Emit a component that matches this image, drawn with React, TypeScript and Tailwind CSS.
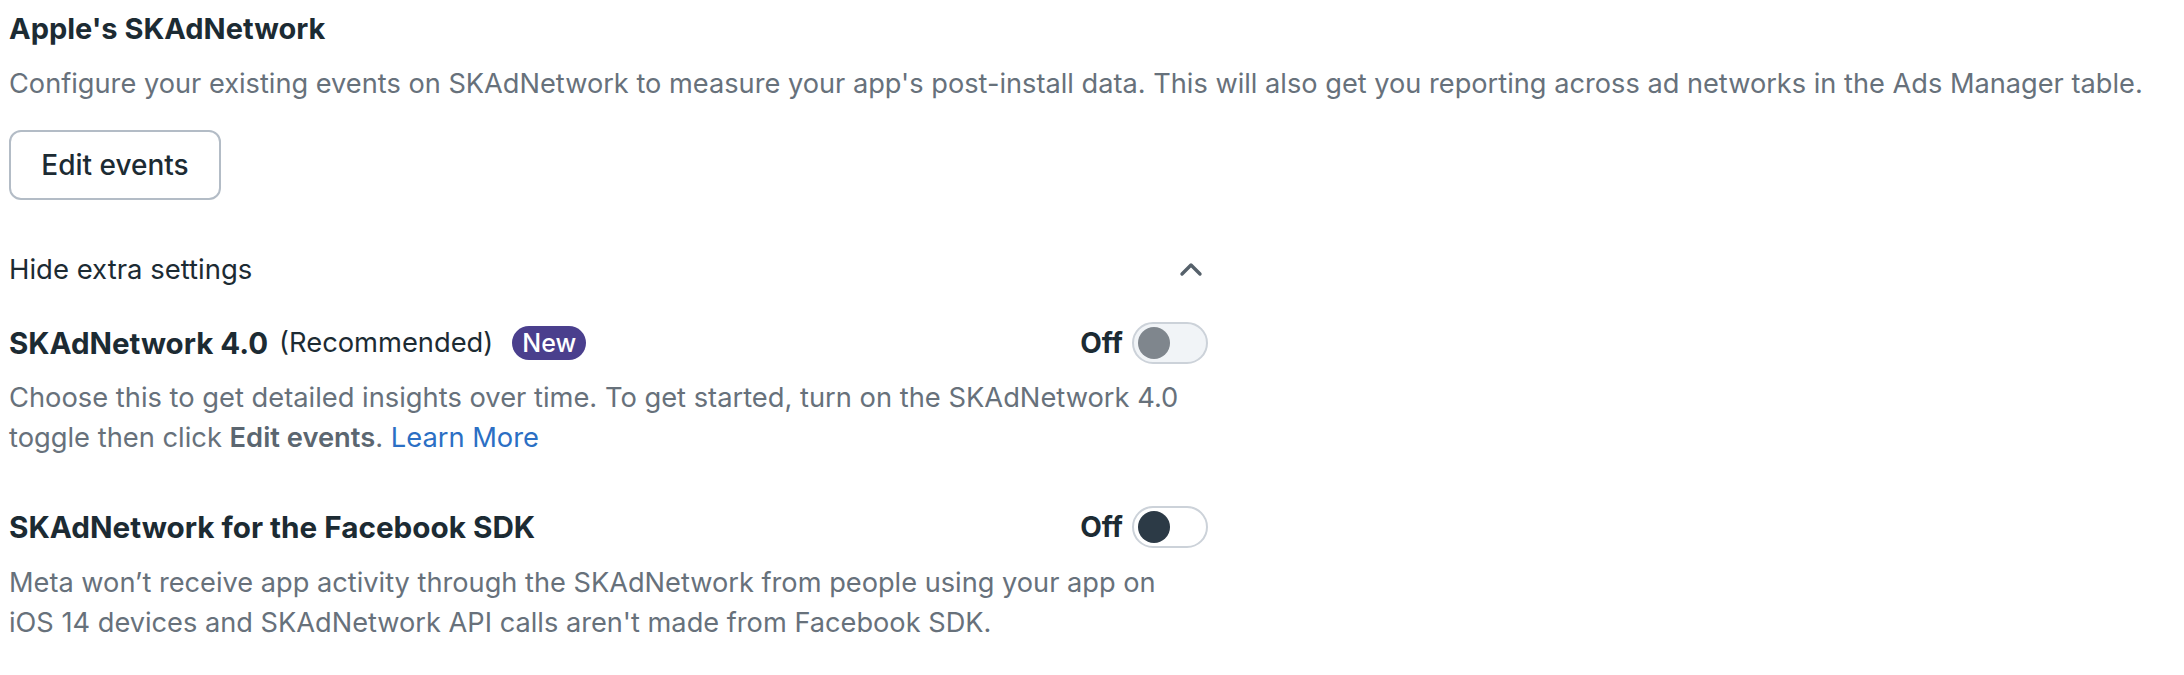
import React from "react";

function Toggle({ knob, track }: { knob: string; track: string }) {
  return (
    <div className={`flex h-[42px] w-[76px] items-center rounded-full border-2 border-[#ccd2d9] px-[4px] ${track}`}>
      <div className={`h-[32px] w-[32px] rounded-full ${knob}`} />
    </div>
  );
}

export default function App() {
  return (
    <div
      className="h-[675px] w-[2184px] bg-white pl-[9px] pt-[9px] text-[#1c2b33]"
      style={{ fontFamily: "Inter, 'Liberation Sans', sans-serif" }}
    >
      <h2 className="text-[29px] font-bold leading-[40px]">Apple's SKAdNetwork</h2>
      <p className="mt-[15px] whitespace-nowrap text-[27.2px] leading-[40px] text-[#67717b]">
        Configure your existing events on SKAdNetwork to measure your app's post-install data. This will also get you reporting across ad networks in the Ads Manager table.
      </p>
      <button className="mt-[26px] flex h-[70px] w-[212px] items-center justify-center rounded-[12px] border-2 border-[#b3bcc6] bg-white text-[28px] font-medium leading-[40px] text-[#1c2b33]">
        Edit events
      </button>

      <div className="w-[1199px]">
        <div className="mt-[49px] flex items-center justify-between">
          <span className="text-[27.5px] leading-[40px]">Hide extra settings</span>
          <svg width="24" height="16" viewBox="0 0 24 16" className="mr-[5px]">
            <polyline points="3,13 12,4 21,13" fill="none" stroke="#56616b" strokeWidth="3.4" strokeLinecap="round" strokeLinejoin="round" />
          </svg>
        </div>

        <div className="mt-[33px] flex h-[42px] items-center justify-between">
          <div className="flex items-center">
            <span className="text-[29.5px] font-bold leading-[40px]">SKAdNetwork 4.0</span>
            <span className="ml-[11px] text-[27.3px] leading-[40px]">(Recommended)</span>
            <span className="ml-[19px] flex h-[34px] items-center rounded-full bg-[#4a3f8d] px-[10px] text-[25px] font-medium leading-[34px] text-white">
              New
            </span>
          </div>
          <div className="flex items-center gap-[9px]">
            <span className="text-[28px] font-bold leading-[40px]">Off</span>
            <Toggle knob="bg-[#7f868d]" track="bg-[#f1f4f7]" />
          </div>
        </div>
        <p className="mt-[14px] whitespace-nowrap text-[27.3px] leading-[40px] text-[#67717b]">
          Choose this to get detailed insights over time. To get started, turn on the SKAdNetwork 4.0
          <br />
          toggle then click <span className="font-semibold text-[#5b6670]">Edit events</span>.{" "}
          <span className="text-[#2b6fc4]">Learn More</span>
        </p>

        <div className="mt-[48px] flex h-[42px] items-center justify-between">
          <span className="text-[29.7px] font-bold leading-[40px]">SKAdNetwork for the Facebook SDK</span>
          <div className="flex items-center gap-[9px]">
            <span className="text-[28px] font-bold leading-[40px]">Off</span>
            <Toggle knob="bg-[#2c3a46]" track="bg-white" />
          </div>
        </div>
        <p className="mt-[15px] whitespace-nowrap text-[27.2px] leading-[40px] text-[#67717b]">
          Meta won’t receive app activity through the SKAdNetwork from people using your app on
          <br />
          iOS 14 devices and SKAdNetwork API calls aren't made from Facebook SDK.
        </p>
      </div>
    </div>
  );
}
